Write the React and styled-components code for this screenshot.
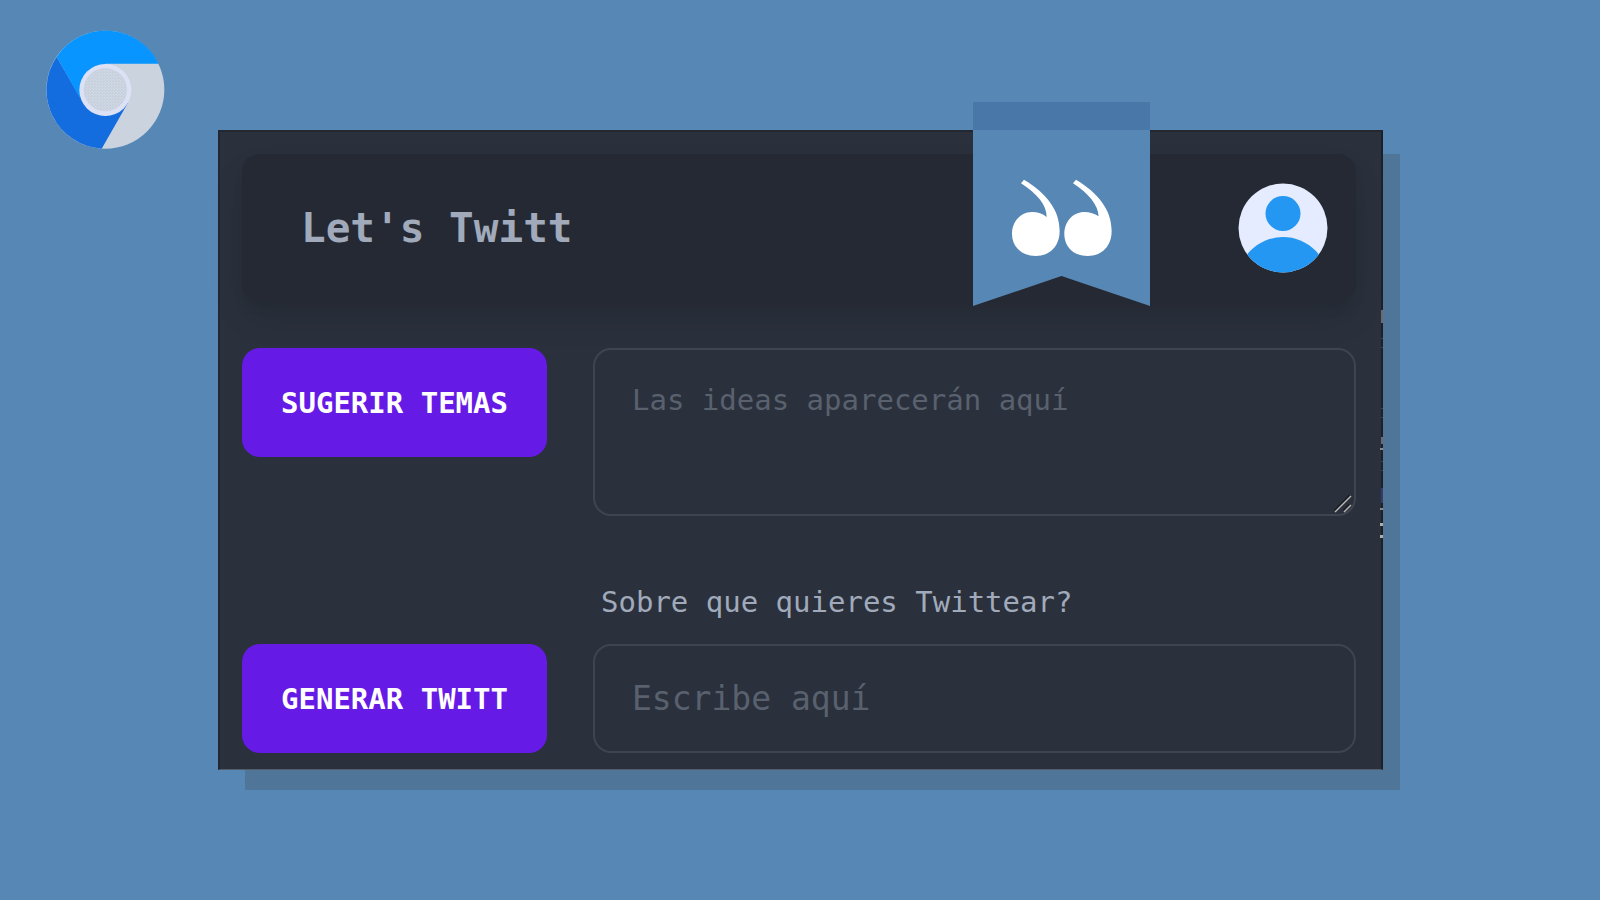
import React, { useState } from "react";
import styled, { createGlobalStyle } from "styled-components";

const GlobalStyle = createGlobalStyle`
  * {
    box-sizing: border-box;
  }

  body {
    margin: 0;
    background: #5687b5;
    font-family: "DejaVu Sans Mono", "Liberation Mono", monospace;
  }
`;

const Page = styled.div`
  display: flex;
  align-items: flex-start;
  gap: 53px;
  min-height: 100vh;
  padding: 30px 217px 30px 46px;
`;

const Logo = styled.svg`
  flex: none;
  width: 119px;
  height: 119px;
`;

const Card = styled.main`
  position: relative;
  flex: 1;
  min-width: 0;
  margin-top: 100px;
  padding: 22px 25px 16px 22px;
  border: 2px solid #222731;
  border-right-color: #1c2027;
  border-bottom: 1px solid #535c69;
  background: #2a303c;
  box-shadow: 22px 19px 0 -5px #4f7599, 22px 25px 0 -5px #4f7599;
`;

const EdgeMarks = styled.svg`
  position: absolute;
  top: 178px;
  right: -2px;
  width: 3px;
  height: 230px;
`;

const Navbar = styled.header`
  display: flex;
  align-items: center;
  justify-content: space-between;
  height: 147px;
  padding: 0 28px 0 59px;
  border-radius: 18px;
  background: #252933;
  box-shadow: 0 18px 36px -4px rgba(0, 0, 0, 0.1), 0 8px 14px -4px rgba(0, 0, 0, 0.1);
`;

const Title = styled.h1`
  margin: 0;
  color: #a0aaba;
  font-size: 41px;
  line-height: 48px;
`;

const AvatarButton = styled.button`
  display: block;
  width: 90px;
  height: 90px;
  padding: 0;
  border: 0;
  border-radius: 50%;
  background: none;
  cursor: pointer;

  svg {
    display: block;
    width: 100%;
    height: 100%;
  }
`;

const Ribbon = styled.svg`
  position: absolute;
  top: -30px;
  right: 231px;
  width: 177px;
  height: 204px;
`;

const Form = styled.form`
  display: grid;
  grid-template-columns: 305px 1fr;
  column-gap: 46px;
  align-items: start;
  margin-top: 47px;
`;

const ActionButton = styled.button`
  height: 109px;
  padding: 0;
  border: 0;
  border-radius: 18px;
  background: #651ae6;
  color: #fff;
  font: bold 29px/36px "DejaVu Sans Mono", "Liberation Mono", monospace;
  text-transform: uppercase;
  cursor: pointer;
`;

const IdeasBox = styled.div`
  position: relative;
  display: flex;
`;

const IdeasArea = styled.textarea`
  width: 100%;
  height: 168px;
  padding: 32px 37px;
  border: 2px solid #40444f;
  border-radius: 18px;
  background: transparent;
  color: #a0aaba;
  font: 29px/36px "DejaVu Sans Mono", "Liberation Mono", monospace;
  resize: none;

  &::placeholder {
    color: #59616e;
  }
`;

const Grip = styled.svg`
  position: absolute;
  right: 4px;
  bottom: 3px;
  width: 18px;
  height: 18px;
  pointer-events: none;
`;

const TopicLabel = styled.label`
  grid-column: 2;
  padding: 68px 8px 24px;
  color: #a0aaba;
  font-size: 29px;
  line-height: 36px;
`;

const TopicInput = styled.input`
  width: 100%;
  height: 109px;
  padding: 0 37px;
  border: 2px solid #40444f;
  border-radius: 18px;
  background: transparent;
  color: #a0aaba;
  font: 33px/40px "DejaVu Sans Mono", "Liberation Mono", monospace;

  &::placeholder {
    color: #59616e;
  }
`;

const BrowserLogo = () => (
  <Logo viewBox="48 30 357 357" aria-hidden="true">
    <defs>
      <pattern id="dots" width="9" height="9" patternUnits="userSpaceOnUse">
        <rect width="9" height="9" fill="#c7d0dd" />
        <circle cx="2" cy="2" r="1.6" fill="#dfe3f3" />
        <circle cx="6.5" cy="6.5" r="1.6" fill="#dfe3f3" />
      </pattern>
    </defs>
    <circle cx="226" cy="209" r="177" fill="#cad3de" />
    <path d="M80 110 A177 177 0 0 0 215 386 L293.500 249 L226 209 L150 232 Z" fill="#146dde" />
    <path d="M80 110 A177 177 0 0 1 386 131 L226 131 L226 209 L150 234 Z" fill="#0995ff" />
    <circle cx="226" cy="210" r="78" fill="#dde1f5" />
    <circle cx="226" cy="209" r="65" fill="url(#dots)" />
  </Logo>
);

const QuoteRibbon = () => (
  <Ribbon viewBox="0 0 177 204" aria-hidden="true">
    <path d="M0 0 H177 V204 L88.500 174 L0 204 Z" fill="#5687b5" />
    <path d="M0 0 H177 V28 H0 Z" fill="#4877a8" />
    <g transform="translate(-23 -12) scale(.3333)" fill="#fff">
      <path d="M222 269 C290 310 329 360 329 423 C329 468 300 498 257 498 C215 498 186 470 186 432 C186 394 213 366 246 366 C264 366 278 371 290 381 C290 345 262 312 213 280 Z" />
      <path d="M378 269 C446 310 485 360 485 423 C485 468 456 498 413 498 C371 498 343 470 343 432 C343 394 370 366 403 366 C420 366 434 371 446 379 C444 345 418 312 369 280 Z" />
    </g>
  </Ribbon>
);

const Avatar = () => (
  <svg viewBox="0 0 90 90" aria-hidden="true">
    <defs>
      <clipPath id="avatarClip">
        <circle cx="45" cy="45" r="44.500" />
      </clipPath>
    </defs>
    <g clipPath="url(#avatarClip)">
      <rect width="90" height="90" fill="#e6ecff" />
      <circle cx="45" cy="30.500" r="17.500" fill="#2497f3" />
      <circle cx="45" cy="99.500" r="45.500" fill="#2497f3" />
    </g>
  </svg>
);

const App = () => {
  const [ideas, setIdeas] = useState("");
  const [topic, setTopic] = useState("");

  return <>
    <GlobalStyle />
    <Page>
      <BrowserLogo />
      <Card>
        <Navbar>
          <Title>Let's Twitt</Title>
          <AvatarButton type="button" aria-label="Perfil">
            <Avatar />
          </AvatarButton>
        </Navbar>

        <Form onSubmit={(e) => e.preventDefault()}>
          <ActionButton type="button">Sugerir temas</ActionButton>
          <IdeasBox>
            <IdeasArea
              aria-label="Ideas"
              placeholder="Las ideas aparecerán aquí"
              value={ideas}
              onChange={(e) => setIdeas(e.target.value)}
            />
            <Grip viewBox="0 0 18 18" aria-hidden="true">
              <path d="M1 16 L16 1 M10 16 L16 10" stroke="#15181e" strokeWidth="3" />
              <path d="M1 17 L17 1 M10 17 L17 10" stroke="#b5b5b5" strokeWidth="1.500" />
            </Grip>
          </IdeasBox>

          <TopicLabel htmlFor="topic">Sobre que quieres Twittear?</TopicLabel>

          <ActionButton type="submit">Generar twitt</ActionButton>
          <TopicInput
            id="topic"
            type="text"
            placeholder="Escribe aquí"
            value={topic}
            onChange={(e) => setTopic(e.target.value)}
          />
        </Form>

        <EdgeMarks viewBox="0 0 3 230" aria-hidden="true">
          <path d="M1 0 H3 V13 H1 Z M1 127 H3 V134 H1 Z" fill="#6b6b70" />
          <path d="M1 178 H3 V193 H1 Z" fill="#343d68" />
          <path d="M0 138 H3 V140 H0 Z M0 198 H3 V200 H0 Z" fill="#8a8a8a" />
          <path d="M0 213 H3 V216 H0 Z M0 225 H3 V228 H0 Z" fill="#b0aca6" />
          <path d="M1 28 H3 V29 H1 Z M1 37 H3 V38 H1 Z M1 98 H3 V99 H1 Z M1 107 H3 V108 H1 Z M1 151 H3 V152 H1 Z M1 160 H3 V161 H1 Z" fill="#3c4048" />
        </EdgeMarks>

        <QuoteRibbon />
      </Card>
    </Page>
  </>;
};

export default App;
